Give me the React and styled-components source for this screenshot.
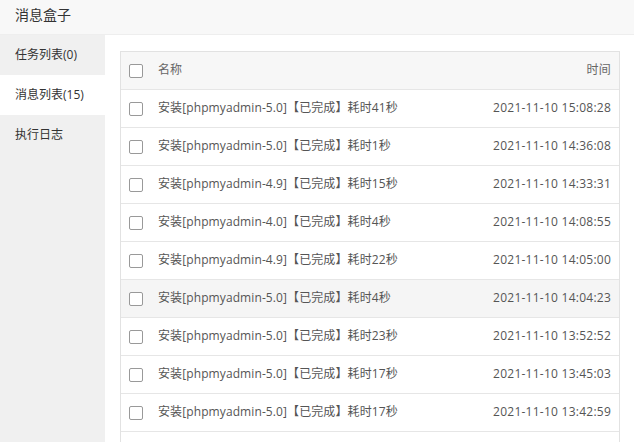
import React from "react";
import styled, { createGlobalStyle } from "styled-components";

const Global = createGlobalStyle`
  html, body { margin: 0; padding: 0; background: #fff; }
  body {
    font-family: "Open Sans", "Noto Sans CJK SC", sans-serif;
    -webkit-font-smoothing: antialiased;
  }
  * { box-sizing: border-box; }
`;

const Box = styled.div`
  width: 634px;
  height: 442px;
  display: flex;
  flex-direction: column;
  overflow: hidden;
  background: #fff;
`;

const TitleBar = styled.div`
  height: 35px;
  flex: none;
  padding-left: 15px;
  background: #f8f8f8;
  border-bottom: 1px solid #eee;
  color: #333;
  font-size: 14px;
  line-height: 30px;
`;

const Body = styled.div`
  flex: 1;
  display: flex;
  min-height: 0;
`;

const Sidebar = styled.div`
  width: 105px;
  flex: none;
  background: #f0f0f0;
  display: flex;
  flex-direction: column;
`;

const NavItem = styled.div`
  height: 40px;
  line-height: 40px;
  padding-left: 15px;
  font-size: 12px;
  color: #333;
  background: ${(p) => (p.$active ? "#fff" : "transparent")};
`;

const Content = styled.div`
  flex: 1;
  padding: 16px 14px 0 15px;
  overflow: hidden;
  display: flex;
  flex-direction: column;
`;

const Table = styled.div`
  flex: none;
  min-height: calc(100% + 20px);
  border: 1px solid #e2e2e2;
  border-bottom: none;
  font-size: 12px;
  color: #666;
`;

const Row = styled.div`
  display: grid;
  grid-template-columns: 37px 1fr auto;
  align-items: center;
  height: 38px;
  padding-right: 8px;
  border-bottom: 1px solid #e6e6e6;
  background: ${(p) => (p.$head ? "#f7f7f7" : p.$hover ? "#f5f5f5" : "#fff")};
  color: ${(p) => (p.$head ? "#666" : "#555")};
`;

const Check = styled.span`
  display: block;
  width: 14px;
  height: 14px;
  margin-left: 8px;
  border: 1px solid #999;
  border-radius: 2px;
  background: #fff;
`;

const Name = styled.span`
  white-space: nowrap;
  letter-spacing: 0.1px;
  margin-bottom: 3px;
`;

const Time = styled.span`
  text-align: right;
  white-space: nowrap;
  letter-spacing: 0.25px;
  margin-bottom: 3px;
`;

const rows = [
  ["安装[phpmyadmin-5.0]【已完成】耗时41秒", "2021-11-10 15:08:28"],
  ["安装[phpmyadmin-5.0]【已完成】耗时1秒", "2021-11-10 14:36:08"],
  ["安装[phpmyadmin-4.9]【已完成】耗时15秒", "2021-11-10 14:33:31"],
  ["安装[phpmyadmin-4.0]【已完成】耗时4秒", "2021-11-10 14:08:55"],
  ["安装[phpmyadmin-4.9]【已完成】耗时22秒", "2021-11-10 14:05:00"],
  ["安装[phpmyadmin-5.0]【已完成】耗时4秒", "2021-11-10 14:04:23"],
  ["安装[phpmyadmin-5.0]【已完成】耗时23秒", "2021-11-10 13:52:52"],
  ["安装[phpmyadmin-5.0]【已完成】耗时17秒", "2021-11-10 13:45:03"],
  ["安装[phpmyadmin-5.0]【已完成】耗时17秒", "2021-11-10 13:42:59"],
];

export default function App() {
  return (
    <Box>
      <Global />
      <TitleBar>消息盒子</TitleBar>
      <Body>
        <Sidebar>
          <NavItem>任务列表(0)</NavItem>
          <NavItem $active>消息列表(15)</NavItem>
          <NavItem>执行日志</NavItem>
        </Sidebar>
        <Content>
          <Table>
            <Row $head>
              <Check />
              <Name>名称</Name>
              <Time>时间</Time>
            </Row>
            {rows.map(([n, t], i) => (
              <Row key={i} $hover={i === 5}>
                <Check />
                <Name>{n}</Name>
                <Time>{t}</Time>
              </Row>
            ))}
          </Table>
        </Content>
      </Body>
    </Box>
  );
}
